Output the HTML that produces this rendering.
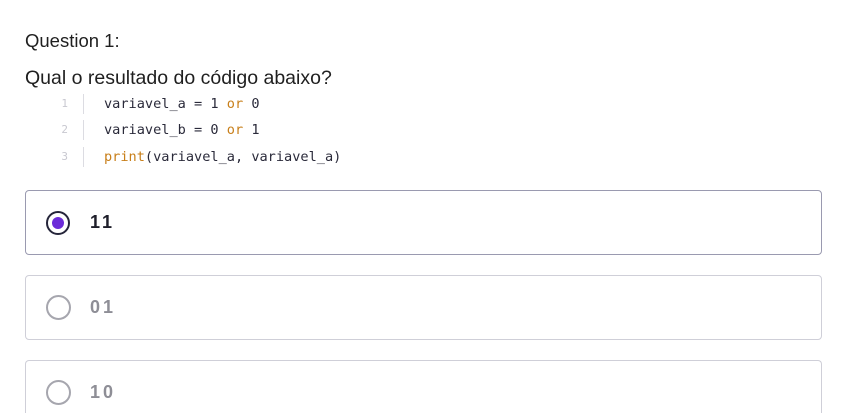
<!DOCTYPE html>
<html><head><meta charset="utf-8"><style>
html,body{margin:0;width:848px;height:413px;overflow:hidden;background:#fff;font-family:"Liberation Sans",sans-serif;color:#1f1f1f;position:relative}
.t{position:absolute;white-space:nowrap}
.code{font-family:"DejaVu Sans Mono","Liberation Mono",monospace;font-size:13.6px;color:#2a2a3a}
.ln{position:absolute;font-family:"DejaVu Sans Mono",monospace;font-size:11px;color:#c8c8d0;width:20px;text-align:right;left:48px}
.sep{position:absolute;left:83px;width:1px;height:20px;background:#dcdce2}
.o{color:#c87f1a}
.box{position:absolute;left:25px;width:795px;height:63px;border:1px solid #cfcfd8;border-radius:4px}
.rad{position:absolute;left:20px;top:19px;width:21px;height:21px;border:2px solid #a6a6ae;border-radius:50%}
.lbl{position:absolute;left:64px;top:21px;font-size:18px;font-weight:bold;letter-spacing:3px;color:#8e8e96}
</style></head><body>
<div class="t" style="left:25px;top:30px;font-size:18.5px">Question 1:</div>
<div class="t" style="left:25px;top:67px;font-size:19.5px">Qual o resultado do código abaixo?</div>
<div class="ln" style="top:97px">1</div><div class="sep" style="top:94px"></div>
<div class="ln" style="top:123px">2</div><div class="sep" style="top:120px"></div>
<div class="ln" style="top:150px">3</div><div class="sep" style="top:147px"></div>
<div class="t code" style="left:104px;top:96px">variavel_a = 1 <span class="o">or</span> 0</div>
<div class="t code" style="left:104px;top:122px">variavel_b = 0 <span class="o">or</span> 1</div>
<div class="t code" style="left:104px;top:149px"><span class="o">print</span>(variavel_a, variavel_a)</div>
<div class="box" style="top:190px;border-color:#9a9ab0"><div class="rad" style="border:2px solid #25253a;left:20px;top:20px;width:20px;height:20px"><div style="position:absolute;left:4px;top:4px;width:12px;height:12px;border-radius:50%;background:#6c2bd9"></div></div><div class="lbl" style="color:#1e1e2a">11</div></div>
<div class="box" style="top:275px"><div class="rad"></div><div class="lbl">01</div></div>
<div class="box" style="top:360px;height:52px;border-bottom:none;border-radius:4px 4px 0 0"><div class="rad"></div><div class="lbl">10</div></div>
</body></html>
